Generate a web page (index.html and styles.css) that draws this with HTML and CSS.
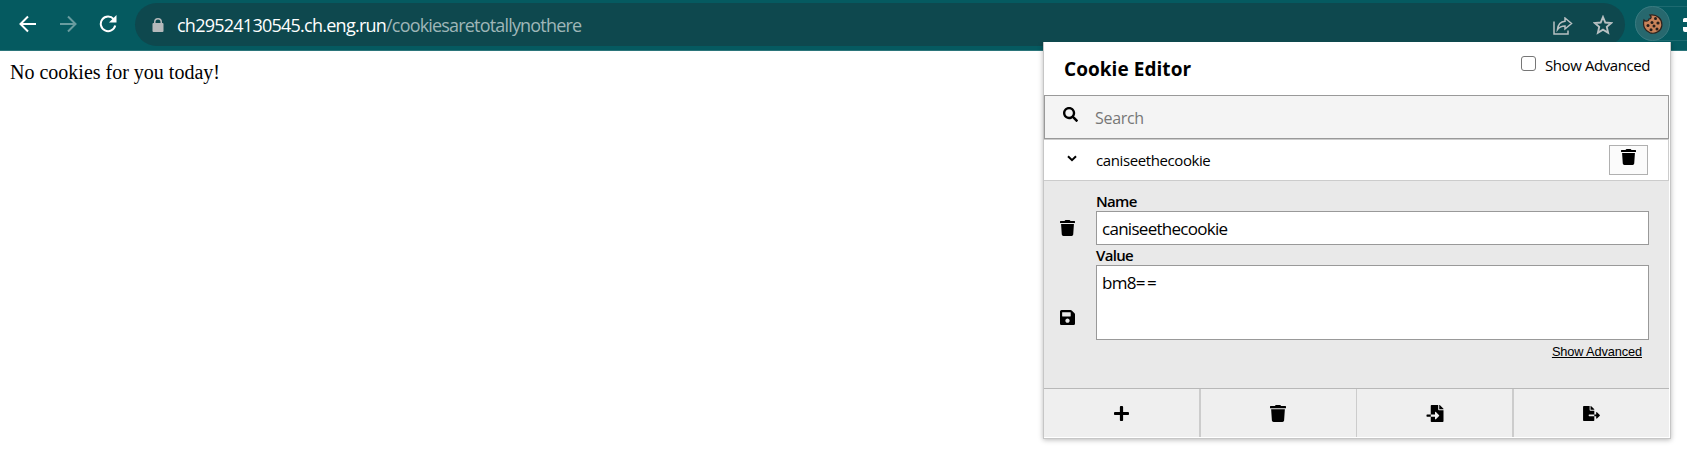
FILE: index.html
```html
<!DOCTYPE html>
<html lang="en">
<head>
<meta charset="utf-8">
<title>Cookie Editor</title>
<link rel="stylesheet" href="styles.css">
</head>
<body>
<svg class="sprite" aria-hidden="true">
  <symbol id="trash" viewBox="0 0 448 512" preserveAspectRatio="none"><path d="M432 32H312l-9.4-18.7A24 24 0 0 0 281.1 0H166.8a23.72 23.72 0 0 0-21.4 13.3L136 32H16A16 16 0 0 0 0 48v32a16 16 0 0 0 16 16h416a16 16 0 0 0 16-16V48a16 16 0 0 0-16-16zM53.2 467a48 48 0 0 0 47.9 45h245.8a48 48 0 0 0 47.9-45L416 128H32z"/></symbol>
</svg>
<header class="toolbar">
  <nav class="nav">
    <svg class="nav-icon" viewBox="0 0 18 18"><path d="M17 9H2M9 1.5 1.5 9 9 16.500"/></svg>
    <svg class="nav-icon dim" viewBox="0 0 18 18"><path d="M1 9h15M9 1.500 16.500 9 9 16.500"/></svg>
    <svg class="nav-icon" viewBox="0 0 18 18"><path d="M14.700 4.200A7.300 7.300 0 1 0 16.200 10.500"/><path class="solid" d="M17.500 0v7.500H10z"/></svg>
  </nav>
  <div class="omnibox">
    <svg class="lock" viewBox="0 0 12 14"><path d="M1.500 5H2V4a4 4 0 0 1 8 0v1h.5A1 1 0 0 1 11.500 6v7a1 1 0 0 1-1 1h-9a1 1 0 0 1-1-1V6a1 1 0 0 1 1-1zM3.500 5h5V4a2.500 2.500 0 0 0-5 0z"/></svg>
    <div class="url"><span class="host">ch29524130545.ch.eng.run</span><span class="path">/cookiesaretotallynothere</span></div>
    <svg class="share" viewBox="0 0 20 18"><path d="M1 4.500V17h14v-3.500M12 1l6.500 5.500L12 12V9C8.500 9 6.500 9.800 4.500 12.500 5 8 7.800 4.600 12 4.300z"/></svg>
    <svg class="star" viewBox="0 0 20 20"><path d="m10 2 2.300 5.500 6 .5-4.500 3.900 1.300 5.800L10 14.600l-5.100 3.100 1.300-5.800L1.700 8l6-.5z"/></svg>
  </div>
  <div class="extensions">
    <div class="extension">
      <svg class="cookie" viewBox="0 0 20 20"><path class="dough" d="M7 1C9 3 8 5 6 5 6 7 3 8 1 6c-1.500 6 1 11 6 12.800 6 1.700 11-2 11.800-7C19.500 5 14 0 7 1z"/><g class="chips"><circle cx="12.500" cy="4.500" r="1.500"/><circle cx="9" cy="8.500" r="1.500"/><circle cx="15" cy="9" r="1.600"/><circle cx="5" cy="11.500" r="1.500"/><circle cx="11" cy="12" r="1.500"/><circle cx="8" cy="15.700" r="1.500"/><circle cx="14" cy="15" r="1.500"/></g></svg>
    </div>
    <svg class="puzzle" viewBox="0 0 4 14"><path d="M0 1.500A1.500 1.500 0 0 1 1.500 0H4v4H0zM0 9h4v5H2a2 2 0 0 1-2-2z"/></svg>
  </div>
</header>
<main class="page">No cookies for you today!</main>
<section class="popup">
  <div class="popup-head">
    <h1 class="title">Cookie Editor</h1>
    <label class="advanced"><span class="check"></span><span class="advanced-text">Show Advanced</span></label>
  </div>
  <div class="search">
    <svg class="search-icon" viewBox="0 0 512 512"><path d="M505 442.700L405.300 343c-4.500-4.500-10.600-7-17-7H372c27.600-35.300 44-79.700 44-128C416 93.100 322.900 0 208 0S0 93.100 0 208s93.100 208 208 208c48.300 0 92.700-16.400 128-44v16.300c0 6.400 2.500 12.500 7 17l99.700 99.700c9.400 9.400 24.600 9.400 33.900 0l28.300-28.300c9.400-9.400 9.400-24.600.1-34zM208 336c-70.700 0-128-57.200-128-128 0-70.700 57.200-128 128-128 70.700 0 128 57.200 128 128 0 70.700-57.200 128-128 128z"/></svg>
    <span class="search-text">Search</span>
  </div>
  <div class="cookie-row">
    <svg class="chevron" viewBox="0 0 10 7"><path d="m1 1.200 4 4 4-4"/></svg>
    <span class="cookie-name">caniseethecookie</span>
    <div class="row-delete"><svg class="icon-trash"><use href="#trash"/></svg></div>
  </div>
  <div class="details">
    <div class="side">
      <svg class="icon-trash"><use href="#trash"/></svg>
      <svg class="icon-save" viewBox="0 32 448 448"><path d="M433.941 129.941l-83.882-83.882A48 48 0 0 0 316.118 32H48C21.490 32 0 53.490 0 80v352c0 26.510 21.490 48 48 48h352c26.510 0 48-21.490 48-48V163.882a48 48 0 0 0-14.059-33.941zM224 416c-35.346 0-64-28.654-64-64 0-35.346 28.654-64 64-64s64 28.654 64 64c0 35.346-28.654 64-64 64zm96-304.520V212c0 6.627-5.373 12-12 12H76c-6.627 0-12-5.373-12-12V108c0-6.627 5.373-12 12-12h228.520c3.183 0 6.235 1.264 8.485 3.515l3.480 3.480A11.996 11.996 0 0 1 320 111.480z"/></svg>
    </div>
    <div class="form">
      <div class="label label-name">Name</div>
      <div class="field">caniseethecookie</div>
      <div class="label label-value">Value</div>
      <div class="field area">bm8<span class="equals">==</span></div>
      <div class="more"><a class="more-link">Show Advanced</a></div>
    </div>
  </div>
  <div class="actions">
    <div class="action"><svg class="icon-plus" viewBox="0 32 448 448"><path d="M416 208H272V64c0-17.670-14.330-32-32-32h-32c-17.670 0-32 14.330-32 32v144H32c-17.670 0-32 14.330-32 32v32c0 17.670 14.330 32 32 32h144v144c0 17.670 14.330 32 32 32h32c17.670 0 32-14.330 32-32V304h144c17.670 0 32-14.330 32-32v-32c0-17.670-14.330-32-32-32z"/></svg></div>
    <div class="action thick"><svg class="icon-trash large"><use href="#trash"/></svg></div>
    <div class="action"><svg class="icon-import" viewBox="0 0 512 512"><path d="M16 288c-8.800 0-16 7.200-16 16v32c0 8.800 7.200 16 16 16h112v-64zm489-183L407.100 7c-4.500-4.500-10.600-7-17-7H384v128h128v-6.100c0-6.300-2.500-12.400-7-16.900zm-153 31V0H152c-13.300 0-24 10.700-24 24v264h128v-65.200c0-14.300 17.300-21.400 27.400-11.300L379 308c6.600 6.700 6.600 17.400 0 24l-95.700 96.400c-10.100 10.100-27.400 3-27.400-11.300V352H128v136c0 13.300 10.700 24 24 24h336c13.300 0 24-10.700 24-24V160H376c-13.200 0-24-10.800-24-24z"/></svg></div>
    <div class="action thick"><svg class="icon-export" viewBox="0 0 576 512"><path d="M384 121.900c0-6.300-2.500-12.400-7-16.900L279.100 7c-4.500-4.500-10.600-7-17-7H256v128h128zM571 308l-95.700-96.400c-10.100-10.100-27.400-3-27.400 11.300V288h-64v64h64v65.200c0 14.300 17.300 21.400 27.400 11.300L571 332c6.600-6.600 6.600-17.400 0-24zm-379 28v-32c0-8.800 7.200-16 16-16h176V160H248c-13.200 0-24-10.800-24-24V0H24C10.700 0 0 10.700 0 24v464c0 13.300 10.700 24 24 24h336c13.300 0 24-10.700 24-24V352H208c-8.800 0-16-7.200-16-16z"/></svg></div>
  </div>
</section>
</body>
</html>
```
FILE: styles.css
```css
* { box-sizing: border-box; }
body { margin: 0; height: 466px; overflow: hidden; background: #fff; color: #000; font-family: "Open Sans", sans-serif; }
svg { display: block; flex: none; }
.sprite { display: none; }

.toolbar { display: flex; align-items: flex-start; height: 51px; padding-top: 3px; background: #055a60; border-bottom: 1px solid #2b757a; }
.nav { display: flex; gap: 22px; width: 135px; padding: 12px 0 0 19px; }
.nav-icon { width: 18px; height: 18px; fill: none; stroke: #fff; stroke-width: 2; }
.nav-icon .solid { fill: #fff; stroke: none; }
.dim { opacity: .4; }
.omnibox { display: flex; align-items: center; width: 1490px; height: 43px; border-radius: 22px; background: #0e484e; padding: 0 12px 0 17px; }
.lock { width: 12px; height: 14px; margin-top: 1px; fill: #b5b9bb; fill-rule: evenodd; }
.url { flex: 1; display: flex; margin: 0 0 0 13px; font-size: 18px; line-height: 24px; white-space: nowrap; }
.host { color: #fff; letter-spacing: -0.75px; }
.path { color: #9fb6b8; letter-spacing: -0.82px; }
.share { width: 20px; height: 18px; margin: 3px 20px 0 0; fill: none; stroke: #b8c0c2; stroke-width: 1.5; }
.star { width: 20px; height: 20px; fill: none; stroke: #b8c0c2; stroke-width: 1.9; }
.extensions { display: flex; flex: 1; height: 35px; margin: 3px 0 0 10px; border: 1px solid #1d6a70; border-right: 0; border-radius: 18px 0 0 18px; }
.extension { display: flex; align-items: center; justify-content: center; width: 35px; height: 35px; margin: -1px 0 0 -1px; border-radius: 50%; background: #27686e; border: 1px solid #397a80; }
.cookie { width: 20px; height: 20px; }
.dough { fill: #c9835a; stroke: #2b211d; stroke-width: 1.2; }
.chips { fill: #271e1b; }
.puzzle { width: 4px; height: 14px; margin: 11px 0 0 13px; fill: #fff; }

.page { padding: 10px; font: 20px/23px "Liberation Serif", serif; }

.popup { position: absolute; left: 1043px; top: 42px; width: 628px; height: 397px; display: flex; flex-direction: column; padding-right: 1px; background: #fff; border: 1px solid #c6c6c6; border-top: 0; box-shadow: 0 1px 5px rgba(0,0,0,.28); clip-path: inset(0 -10px -10px -10px); }
.popup-head { display: flex; justify-content: space-between; height: 53px; padding: 0 19px 0 20px; }
.title { margin: 13px 0 0; font-size: 19px; line-height: 28px; font-weight: 700; letter-spacing: .05px; white-space: nowrap; }
.advanced { display: flex; align-items: flex-start; }
.check { width: 15px; height: 15px; margin: 14px 9px 0 0; border: 1px solid #767676; border-radius: 3px; }
.advanced-text { margin-top: 13px; font-size: 15px; line-height: 20px; letter-spacing: -.42px; white-space: nowrap; }
.search { display: flex; height: 44px; padding: 11px 0 0 18px; background: #f4f4f4; border: 1px solid #999; }
.search-icon { width: 15px; height: 15px; }
.search-text { margin: -1px 0 0 17px; font-size: 16px; line-height: 24px; color: #777; letter-spacing: -.3px; }
.cookie-row { display: flex; height: 42px; padding: 0 20px 0 23px; border: 1px solid #ccc; border-left: 0; }
.chevron { width: 10px; height: 7px; margin-top: 15px; fill: none; stroke: #000; stroke-width: 2; }
.cookie-name { flex: 1; margin: 10px 0 0 19px; font-size: 15px; line-height: 20px; letter-spacing: -.4px; }
.row-delete { display: flex; justify-content: center; width: 39px; height: 30px; margin-top: 5px; padding-top: 3px; background: #fbfbfb; border: 1px solid #b0b0b0; }
.icon-trash { width: 15px; height: 16px; }
.icon-trash.large { width: 16px; height: 17px; margin-right: 2px; }
.details { display: flex; height: 207px; background: #e9e9e9; }
.side { width: 52px; padding: 39px 0 0 16px; }
.icon-save { width: 15px; height: 15px; margin-top: 74px; }
.form { width: 553px; padding-top: 11px; }
.label { font-size: 15px; font-weight: 600; line-height: 19px; letter-spacing: -.7px; }
.label-name { height: 19px; }
.label-value { height: 20px; padding-top: 1px; }
.field { height: 34px; padding: 5px; border: 1px solid #999; background: #fff; font-size: 17px; line-height: 24px; letter-spacing: -.72px; }
.area { height: 75px; }
.equals { letter-spacing: 1.5px; }
.more { display: flex; justify-content: flex-end; padding: 4px 7px 0 0; }
.more-link { font: 12.8px/15px "Liberation Sans", sans-serif; letter-spacing: -.13px; text-decoration: underline; white-space: nowrap; }
.actions { display: grid; grid-template-columns: 155px 157px 156px 157px; height: 49px; background: #efefef; border-top: 1px solid #b8b8b8; }
.action { display: flex; align-items: center; justify-content: center; border-left: 1px solid #ccc; }
.action:first-child { border-left: 0; }
.action.thick { border-left-width: 2px; }
.icon-plus { width: 15px; height: 15px; }
.icon-import { width: 18px; height: 17px; }
.icon-export { width: 17px; height: 15px; }
```
